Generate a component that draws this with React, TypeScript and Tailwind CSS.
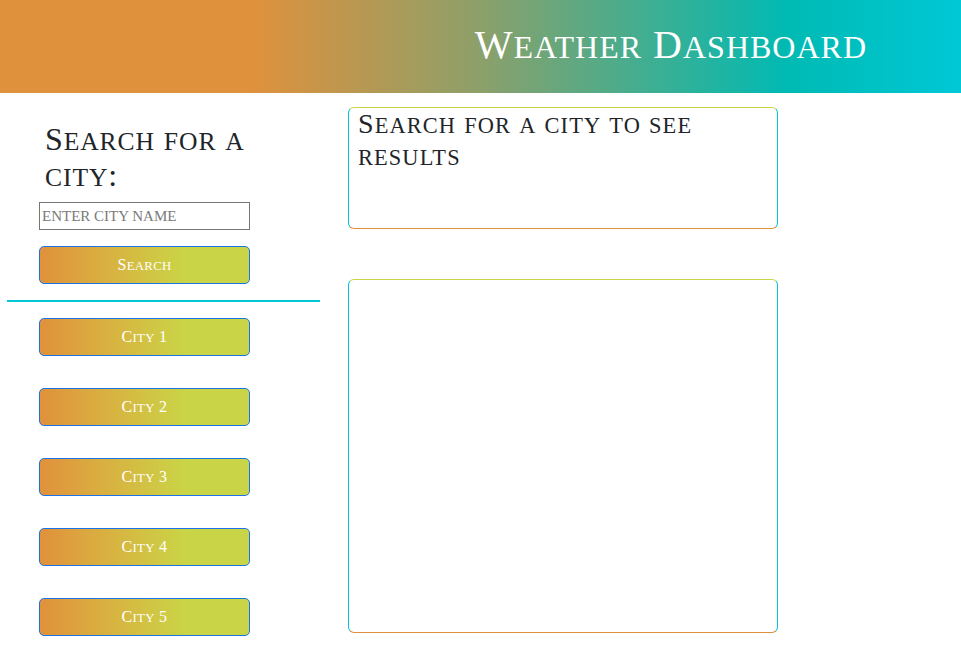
import React from 'react';

const cities = ['City 1', 'City 2', 'City 3', 'City 4', 'City 5'];

const serif = { fontFamily: '"Liberation Serif", "DejaVu Serif", serif' };

// Playfair-style small caps: lowercase letters drawn as smaller capitals
function SmallCaps({ text }: { text: string }) {
  const parts = text.split(/([a-z]+)/);
  return (
    <>
      {parts.map((p, i) =>
        /^[a-z]+$/.test(p) ? (
          <span key={i} className="text-[0.8em] leading-none">
            {p.toUpperCase()}
          </span>
        ) : (
          <React.Fragment key={i}>{p}</React.Fragment>
        )
      )}
    </>
  );
}

function GradientButton({ label }: { label: string }) {
  return (
    <button
      className="w-[211px] h-[38px] rounded-[5px] border border-[#1a73e8] bg-gradient-to-r from-[#e0913c] to-[#c9d546] to-[70%] text-white text-[16px] tracking-[0.3px] leading-none"
    >
      <SmallCaps text={label} />
    </button>
  );
}

export default function App() {
  return (
    <div className="w-[961px] h-[660px] bg-white text-[#212529] overflow-hidden" style={serif}>
      {/* Header */}
      <header className="h-[93px] bg-[linear-gradient(to_right,#e0913c_26%,#8ca06a_50%,#00bab3_82%,#00c8d6_100%)] flex items-center justify-end pr-[94px]">
        <h1 className="text-white text-[40px] tracking-[1px] mt-[-4px]">
          <SmallCaps text="Weather Dashboard" />
        </h1>
      </header>

      <div className="flex">
        {/* Sidebar */}
        <aside className="w-[320px] pl-[7px] pt-[28px] shrink-0">
          <div className="pl-[32px]">
            <h2 className="pl-[6px] text-[32px] leading-[36px] tracking-[0.9px] w-[250px]">
              <SmallCaps text="Search for a city:" />
            </h2>
            <input
              placeholder="ENTER CITY NAME"
              className="mt-[9px] block w-[211px] h-[28px] border border-[#767676] px-[2px] text-[15px] placeholder:text-[#7a7a7a] outline-none"
              style={serif}
            />
            <div className="mt-[16px]">
              <GradientButton label="Search" />
            </div>
          </div>
          <div className="mt-[16px] h-[2px] bg-[#00c8d6] w-[313px]" />
          <div className="pl-[32px] pt-[16px] flex flex-col gap-[32px]">
            {cities.map((c) => (
              <GradientButton key={c} label={c} />
            ))}
          </div>
        </aside>

        {/* Main */}
        <main className="pl-[28px] pt-[14px] flex flex-col gap-[50px]">
          <section className="w-[430px] h-[122px] rounded-[6px] border border-[#00c5d5] border-t-[#c9d546] border-b-[#e0913c] px-[9px]">
            <h3 className="text-[28px] leading-[32px] tracking-[1.1px] w-[380px]">
              <SmallCaps text="Search for a city to see results" />
            </h3>
          </section>
          <section className="w-[430px] h-[354px] rounded-[6px] border border-[#00c5d5] border-t-[#c9d546] border-b-[#e0913c]" />
        </main>
      </div>
    </div>
  );
}
